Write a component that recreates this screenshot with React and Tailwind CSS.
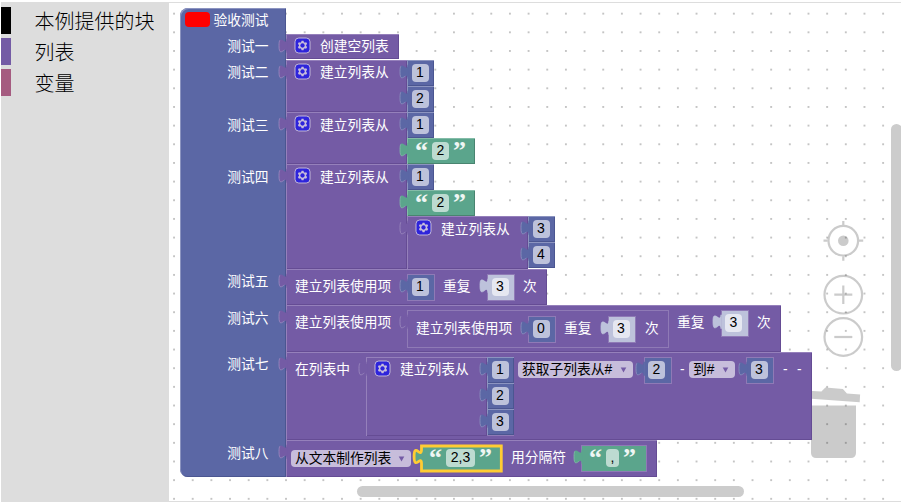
import React from "react";

const TAB = "M8 20c0-10-8 8-8-7.5s8 2.5 8-7.5";

const KINDS = {
  list: { box: "bg-[#745ba5] shadow-[inset_1px_1px_0_#9580bb,inset_-1px_-1px_0_#654c94]", fill: "#745ba5", light: "#9e8cc0" },
  num: { box: "bg-[#5b67a5] shadow-[inset_1px_1px_0_#8c94c0,inset_-1px_-1px_0_#4b5691]", fill: "#5b67a5", light: "#8c94c0" },
  shadow: { box: "bg-[#bdc2db] shadow-[inset_1px_1px_0_#c6c9e0,inset_-1px_-1px_0_#b3b7d6]", fill: "#bdc2db", light: "#bdc2db" },
  text: { box: "bg-[#5ba58c] shadow-[inset_1px_1px_0_#84bca8,inset_-1px_-1px_0_#498470]", fill: "#5ba58c", light: "#84bca8" },
};

function Block({ kind = "list", inset = false, className = "", children }) {
  const k = KINDS[kind];
  return (
    <div className={`relative flex shrink-0 items-start ${k.box} ${inset ? "outline outline-1 -outline-offset-1 outline-[#8f7ab6]" : ""} ${className}`}>
      <svg className="absolute -left-[7.5px] -top-[0.5px] overflow-visible" width="10" height="20" viewBox="0 0 10.7 21.4">
        <path d="M9.5 20L8 20c0-10-8 8-8-7.5s8 2.5 8-7.5L9.5 5z" fill={k.fill} />
        <path d={TAB} fill="none" stroke={k.light} strokeOpacity=".85" strokeWidth="1" strokeDasharray="17 40" strokeDashoffset="-5" />
      </svg>
      {children}
    </div>
  );
}

function Num({ n, shadow = false, inset = false, className = "" }) {
  return (
    <Block kind={shadow ? "shadow" : "num"} inset={inset} className={`${inset ? "h-[27px] w-[28px]" : "h-[26px] w-[27px]"} ${className}`}>
      <span className="ml-[4.5px] mt-[4px] h-[17.5px] w-[17px] rounded-[4px] bg-white/60 text-center text-[14px] leading-[17.5px] text-black">{n}</span>
    </Block>
  );
}

function Str({ value, w, field, inset, className = "" }) {
  return (
    <Block kind="text" inset={inset} className={`${inset ? "h-[27px]" : "h-[26px]"} ${w} ${className}`}>
      <span className="ml-[8px] mt-0 h-[20px] w-[13px] font-['Liberation_Serif',serif] text-[26px] font-bold leading-[26px] text-white/90">“</span>
      <span className={`ml-[4px] mt-[4px] h-[17.5px] rounded-[4px] bg-white/60 text-center text-[14px] leading-[17.5px] text-black ${field}`}>{value}</span>
      <span className="ml-[4px] mt-0 h-[20px] w-[13px] font-['Liberation_Serif',serif] text-[26px] font-bold leading-[26px] text-white/90">”</span>
    </Block>
  );
}

function T({ low = false, className = "", children }) {
  return <span className={`shrink-0 whitespace-nowrap text-white ${low ? "leading-[28px]" : "leading-[26px]"} ${className}`}>{children}</span>;
}

function Gear() {
  return (
    <svg className="ml-[9px] mt-[4px] shrink-0 overflow-visible opacity-60" width="15" height="15" viewBox="0 0 16 16">
      <rect width="16" height="16" rx="4" fill="#00f" stroke="#fff" />
      <path
        fill="#fff"
        d="m4.203,7.296 0,1.368 -0.92,0.677 -0.11,0.41 0.9,1.559 0.41,0.11 1.043,-0.457 1.187,0.683 0.127,1.134 0.3,0.3 1.8,0 0.3,-0.299 0.127,-1.138 1.185,-0.682 1.046,0.458 0.409,-0.11 0.9,-1.559 -0.11,-0.41 -0.92,-0.677 0,-1.366 0.92,-0.677 0.11,-0.41 -0.9,-1.559 -0.409,-0.109 -1.046,0.458 -1.185,-0.682 -0.127,-1.138 -0.3,-0.299 -1.8,0 -0.3,0.3 -0.126,1.135 -1.187,0.682 -1.043,-0.457 -0.41,0.11 -0.899,1.559 0.108,0.409z"
      />
      <circle cx="8" cy="8" r="2.3" fill="#00f" />
    </svg>
  );
}

function Dropdown({ className = "", children }) {
  return (
    <span className={`flex h-[17px] shrink-0 items-center justify-between whitespace-nowrap rounded-[4px] bg-white/60 pl-[4px] pr-[6px] leading-[17px] text-black ${className}`}>
      {children}
      <svg width="7" height="6" viewBox="0 0 7 6"><path d="M.7.5h5.6L3.5 5.5z" fill="#745ba5" /></svg>
    </span>
  );
}

function CreateWith({ h, inset, low, className = "", children }) {
  return (
    <div className={`flex shrink-0 items-start ${h} ${inset ? "outline outline-1 -outline-offset-1 outline-[#8f7ab6]" : ""} ${className}`}>
      <Block className="h-full w-[121px]">
        <Gear />
        <T low={low} className="ml-[10px]">建立列表从</T>
      </Block>
      <div className="flex flex-col items-start">{children}</div>
    </div>
  );
}

function Row({ label, h, low = false, children }) {
  return (
    <div className={`flex items-start ${h}`}>
      <div className={`h-full w-[106px] shrink-0 pr-[17.5px] text-right text-white ${low ? "leading-[28px]" : "leading-[26px]"}`}>{label}</div>
      {children}
    </div>
  );
}

function Suite() {
  return (
    <div className="relative w-[106px] rounded-l-[8px] rounded-tr-[1px] bg-[#5b67a5] text-[13.75px] shadow-[inset_1px_1px_0_#8c94c0,inset_-1px_-1px_0_#4b5691]">
      <div className="flex h-[26px] items-start">
        <span className="ml-[5px] mt-[4px] h-[15px] w-[24.5px] rounded-[4px] bg-[#f00]" />
        <T className="ml-[4px]">验收测试</T>
      </div>
      <Row label="测试一" h="h-[26px]">
        <Block className="h-[25px] w-[113px]">
          <Gear />
          <T className="ml-[10px]">创建空列表</T>
        </Block>
      </Row>
      <Row label="测试二" h="h-[52px]">
        <CreateWith h="h-[52px]">
          <Num n="1" />
          <Num n="2" />
        </CreateWith>
      </Row>
      <Row label="测试三" h="h-[52px]" low>
        <CreateWith h="h-[52px]" low>
          <Num n="1" />
          <Str value="2" w="w-[68px]" field="w-[17px]" />
        </CreateWith>
      </Row>
      <Row label="测试四" h="h-[105px]" low>
        <CreateWith h="h-[105px]" low>
          <Num n="1" />
          <Str value="2" w="w-[68px]" field="w-[17px]" />
          <CreateWith h="h-[53px]" low>
            <Num n="3" />
            <Num n="4" />
          </CreateWith>
        </CreateWith>
      </Row>
      <Row label="测试五" h="h-[36px]">
        <Block className="h-[36px] w-[261px]">
          <T className="ml-[9px] mt-[5px] w-[112px]">建立列表使用项</T>
          <Num n="1" inset className="mt-[5px]" />
          <T className="ml-[8px] mt-[5px] w-[44px]">重复</T>
          <Num n="3" shadow inset className="mt-[5px]" />
          <T className="ml-[8px] mt-[5px]">次</T>
        </Block>
      </Row>
      <Row label="测试六" h="h-[47px]" low>
        <Block className="h-[47px] w-[495px]">
          <T className="ml-[9px] mt-[5px] w-[112px]">建立列表使用项</T>
          <Block inset className="mt-[5px] h-[38px] w-[262px]">
            <T className="ml-[9px] mt-[6px] w-[112px]">建立列表使用项</T>
            <Num n="0" inset className="mt-[6px]" />
            <T className="ml-[8px] mt-[6px] w-[44px]">重复</T>
            <Num n="3" shadow inset className="mt-[6px]" />
            <T className="ml-[9px] mt-[6px]">次</T>
          </Block>
          <T className="ml-[8px] mt-[5px] w-[43.5px]">重复</T>
          <Num n="3" shadow inset className="mt-[5px]" />
          <T className="ml-[8.5px] mt-[5px]">次</T>
        </Block>
      </Row>
      <Row label="测试七" h="h-[88px]">
        <Block className="h-[88px] w-[526px]">
          <T className="ml-[9px] mt-[5px] w-[71px]">在列表中</T>
          <CreateWith h="h-[79px]" inset className="mt-[5px]">
            <Num n="1" />
            <Num n="2" />
            <Num n="3" />
          </CreateWith>
          <Dropdown className="ml-[4px] mt-[9px] w-[115px]">获取子列表从#</Dropdown>
          <Num n="2" inset className="ml-[10.5px] mt-[5px]" />
          <T className="ml-[8.5px] mt-[5px] w-[9px]">-</T>
          <Dropdown className="mt-[9px] w-[46px]">到#</Dropdown>
          <Num n="3" inset className="ml-[11px] mt-[5px]" />
          <T className="ml-[9px] mt-[5px] w-[14px]">-</T>
          <T className="mt-[5px]">-</T>
        </Block>
      </Row>
      <Row label="测试八" h="h-[37px]" low>
        <Block className="h-[37px] w-[371px]">
          <Dropdown className="ml-[5px] mt-[10px] w-[120px]">从文本制作列表</Dropdown>
          <div className="relative ml-[10px] mt-[5px]">
            <Str value="2,3" w="w-[81px]" field="w-[29px]" />
            <svg className="absolute -left-[8px] top-0 overflow-visible" width="90" height="27" viewBox="0 0 90 27">
              <path d="M8.5 1H88.3V26H8.5V18.6c0-9.3-7.4 7.4-7.4-7s7.4 2.3 7.4-7z" fill="none" stroke="#fc3" strokeWidth="2.8" />
            </svg>
          </div>
          <T className="ml-[9px] mt-[5px] w-[70px]">用分隔符</T>
          <Str value="," w="w-[66px]" field="w-[13px]" inset className="mt-[5px]" />
        </Block>
      </Row>
    </div>
  );
}

const CATEGORIES = [
  { name: "本例提供的块", color: "bg-black" },
  { name: "列表", color: "bg-[#745ba5]" },
  { name: "变量", color: "bg-[#a55b80]" },
];

function Canvas() {
  const dots = [];
  for (let r = 0; r < 27; r++)
    for (let c = 0; c < 39; c++)
      dots.push(<rect key={`${r}-${c}`} x={4.1 + c * 18.66} y={9.7 + r * 18.66} width="1.9" height="1.9" />);
  return (
    <svg className="absolute inset-0" width="732" height="498" viewBox="0 0 732 498">
      <g fill="#c4c4c4">{dots}</g>
      <g transform="translate(-169 -3)" fill="none" stroke="#000" opacity=".2" strokeWidth="2.2">
        <circle cx="843.3" cy="240.7" r="14.8" />
        <circle cx="843.3" cy="240.7" r="5.3" fill="#000" stroke="none" />
        <path d="M843.3 221v4.2M843.3 256.2v4.6M823.5 240.7h4.2M858.8 240.7h4.4" />
        <circle cx="843.3" cy="294.7" r="18.8" />
        <path d="M834.3 294.7h18M843.3 285.4v8.2M843.3 295.8v8.2" />
        <circle cx="843.3" cy="337" r="18.8" />
        <path d="M834.3 337h18" />
        <path d="M811 405.6h45v47.5a5 5 0 0 1-5 5h-35a5 5 0 0 1-5-5zM808 390.8l13.4.8 4-4 17.5 1.5 4 4.3 13.2 1-.4 7.8-51.7-3.7z" fill="#000" stroke="none" />
      </g>
    </svg>
  );
}

export default function App() {
  return (
    <div className="flex h-[504px] w-[901px] flex-col overflow-hidden bg-white pl-px pt-[2px] font-['Liberation_Sans','Noto_Sans_CJK_SC',sans-serif]">
      <div className="flex h-[500px] border-y border-[#ddd]">
        <nav className="flex w-[168px] shrink-0 flex-col gap-[4px] bg-[#ddd] pt-[4px]">
          {CATEGORIES.map((c) => (
            <div key={c.name} className="flex h-[27px] items-start">
              <span className={`h-full w-[10px] ${c.color}`} />
              <span className="ml-[23.5px] text-[20px] font-light leading-[30px] text-black">{c.name}</span>
            </div>
          ))}
        </nav>
        <main className="relative min-w-0 flex-1 overflow-hidden pl-[11px] pt-[5px]">
          <Canvas />
          <Suite />
          <div className="absolute left-[722px] top-[121px] h-[247px] w-[11px] rounded-full bg-[#ccc]" />
          <div className="absolute left-[188px] top-[483px] h-[11px] w-[387px] rounded-full bg-[#ccc]" />
        </main>
      </div>
    </div>
  );
}
